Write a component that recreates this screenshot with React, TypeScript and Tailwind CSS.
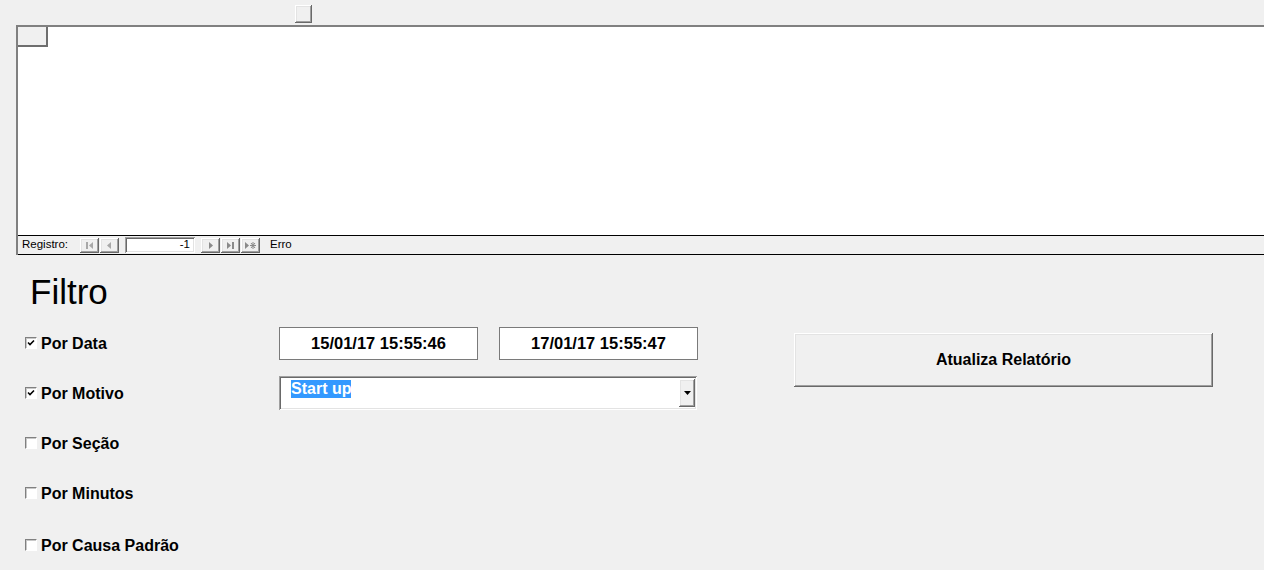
import React from 'react';

const raised =
  'shadow-[inset_-1px_-1px_0_#696969,inset_1px_1px_0_#ffffff,inset_-2px_-2px_0_#a0a0a0,inset_2px_2px_0_#e3e3e3]';
const sunken =
  'shadow-[inset_1px_1px_0_#a0a0a0,inset_-1px_-1px_0_#ffffff,inset_2px_2px_0_#696969,inset_-2px_-2px_0_#e3e3e3]';

function NavButton({ kind, dim }: { kind: 'first' | 'prev' | 'next' | 'last' | 'new'; dim?: boolean }) {
  const c = dim ? '#a8a8a8' : '#8a8a8a';
  return (
    <div className={`w-[19px] h-[15px] bg-[#f0f0f0] flex items-center justify-center ${raised}`}>
      <svg width="13" height="9" viewBox="0 0 13 9">
        {kind === 'first' && (
          <>
            <rect x="3" y="1" width="2" height="7" fill={c} />
            <polygon points="10,1 10,8 6,4.5" fill={c} />
          </>
        )}
        {kind === 'prev' && <polygon points="8,1 8,8 4,4.5" fill={c} />}
        {kind === 'next' && <polygon points="5,1 5,8 9,4.5" fill={c} />}
        {kind === 'last' && (
          <>
            <polygon points="3,1 3,8 7,4.5" fill={c} />
            <rect x="8" y="1" width="2" height="7" fill={c} />
          </>
        )}
        {kind === 'new' && (
          <>
            <polygon points="1,1 1,8 5,4.5" fill={c} />
            <path d="M9 1v7M6 4.5h6M7 2l4 5M11 2l-4 5" stroke={c} strokeWidth="1" />
          </>
        )}
      </svg>
    </div>
  );
}

function CheckBox({ checked, label }: { checked?: boolean; label: string }) {
  return (
    <div className="flex items-center gap-[4px]">
      <div className="w-[12px] h-[12px] bg-white border-t border-l border-[#808080] border-b border-r border-b-white border-r-white shadow-[inset_1px_1px_0_#c8c8c8] flex items-center justify-center">
        {checked && (
          <svg width="8" height="8" viewBox="0 0 8 8">
            <path d="M1 3.5l2 2 4-4" stroke="#000" strokeWidth="1.6" fill="none" />
          </svg>
        )}
      </div>
      <span className="text-[16px] font-bold text-black leading-none mt-[1px]">{label}</span>
    </div>
  );
}

export default function App() {
  return (
    <div className="w-[1264px] h-[570px] bg-[#f0f0f0] overflow-hidden font-['Liberation_Sans',Arial,sans-serif] text-black">
      {/* small control above the subform */}
      <div className="h-[25px] pt-[5px] pl-[295px]">
        <div className={`w-[17px] h-[18px] bg-[#f0f0f0] ${raised}`}></div>
      </div>

      {/* subform */}
      <div className="ml-[16px] w-[1260px] border-l-2 border-t-2 border-l-[#808080] border-t-[#808080]">
        <div className="h-[208px] bg-white">
          <div className="w-[30px] h-[20px] bg-[#f0f0f0] border-r-2 border-b-2 border-[#6e6e6e]"></div>
        </div>
        <div className="h-[20px] border-t border-b border-black bg-[#f0f0f0] flex items-center text-[11.5px]">
          <span className="w-[62px] pl-[4px]">Registro:</span>
          <div className="flex gap-[1px]">
            <NavButton kind="first" dim />
            <NavButton kind="prev" dim />
          </div>
          <div className={`ml-[6px] w-[70px] h-[16px] bg-white flex items-center justify-end pr-[5px] ${sunken}`}>
            -1
          </div>
          <div className="ml-[6px] flex gap-[1px]">
            <NavButton kind="next" />
            <NavButton kind="last" />
            <NavButton kind="new" />
          </div>
          <span className="ml-[10px]">Erro</span>
        </div>
      </div>

      {/* filtro */}
      <div className="mt-[19px] pl-[30px] text-[35px] leading-none">Filtro</div>

      <div className="mt-[9px] pl-[25px] flex">
        <div className="w-[769px] flex flex-col">
          <div className="h-[50px] flex items-center">
            <div className="w-[254px]">
              <CheckBox checked label="Por Data" />
            </div>
            <div className="w-[199px] h-[33px] bg-white border border-[#7a7a7a] flex items-center justify-center text-[16.5px] font-bold">
              15/01/17 15:55:46
            </div>
            <div className="ml-[21px] w-[199px] h-[33px] bg-white border border-[#7a7a7a] flex items-center justify-center text-[16.5px] font-bold">
              17/01/17 15:55:47
            </div>
          </div>
          <div className="h-[50px] flex items-center">
            <div className="w-[254px]">
              <CheckBox checked label="Por Motivo" />
            </div>
            <div className={`w-[418px] h-[34px] bg-white flex items-start pt-[4px] pl-[12px] pr-[2px] ${sunken}`}>
              <span className="bg-[#3399ff] text-white text-[16px] font-bold leading-[18px]">Start up</span>
              <div className={`ml-auto -mt-[1px] w-[16px] h-[28px] bg-[#f0f0f0] flex items-center justify-center ${raised}`}>
                <svg width="7" height="4" viewBox="0 0 7 4">
                  <polygon points="0,0 7,0 3.5,4" fill="#000" />
                </svg>
              </div>
            </div>
          </div>
          <div className="h-[50px] flex items-center">
            <CheckBox label="Por Seção" />
          </div>
          <div className="h-[50px] flex items-center">
            <CheckBox label="Por Minutos" />
          </div>
          <div className="mt-[2px] h-[50px] flex items-center">
            <CheckBox label="Por Causa Padrão" />
          </div>
        </div>
        <div className="mt-[15px]">
          <button className={`w-[419px] h-[54px] bg-[#f0f0f0] text-[16px] font-bold ${raised}`}>
            Atualiza Relatório
          </button>
        </div>
      </div>
    </div>
  );
}
